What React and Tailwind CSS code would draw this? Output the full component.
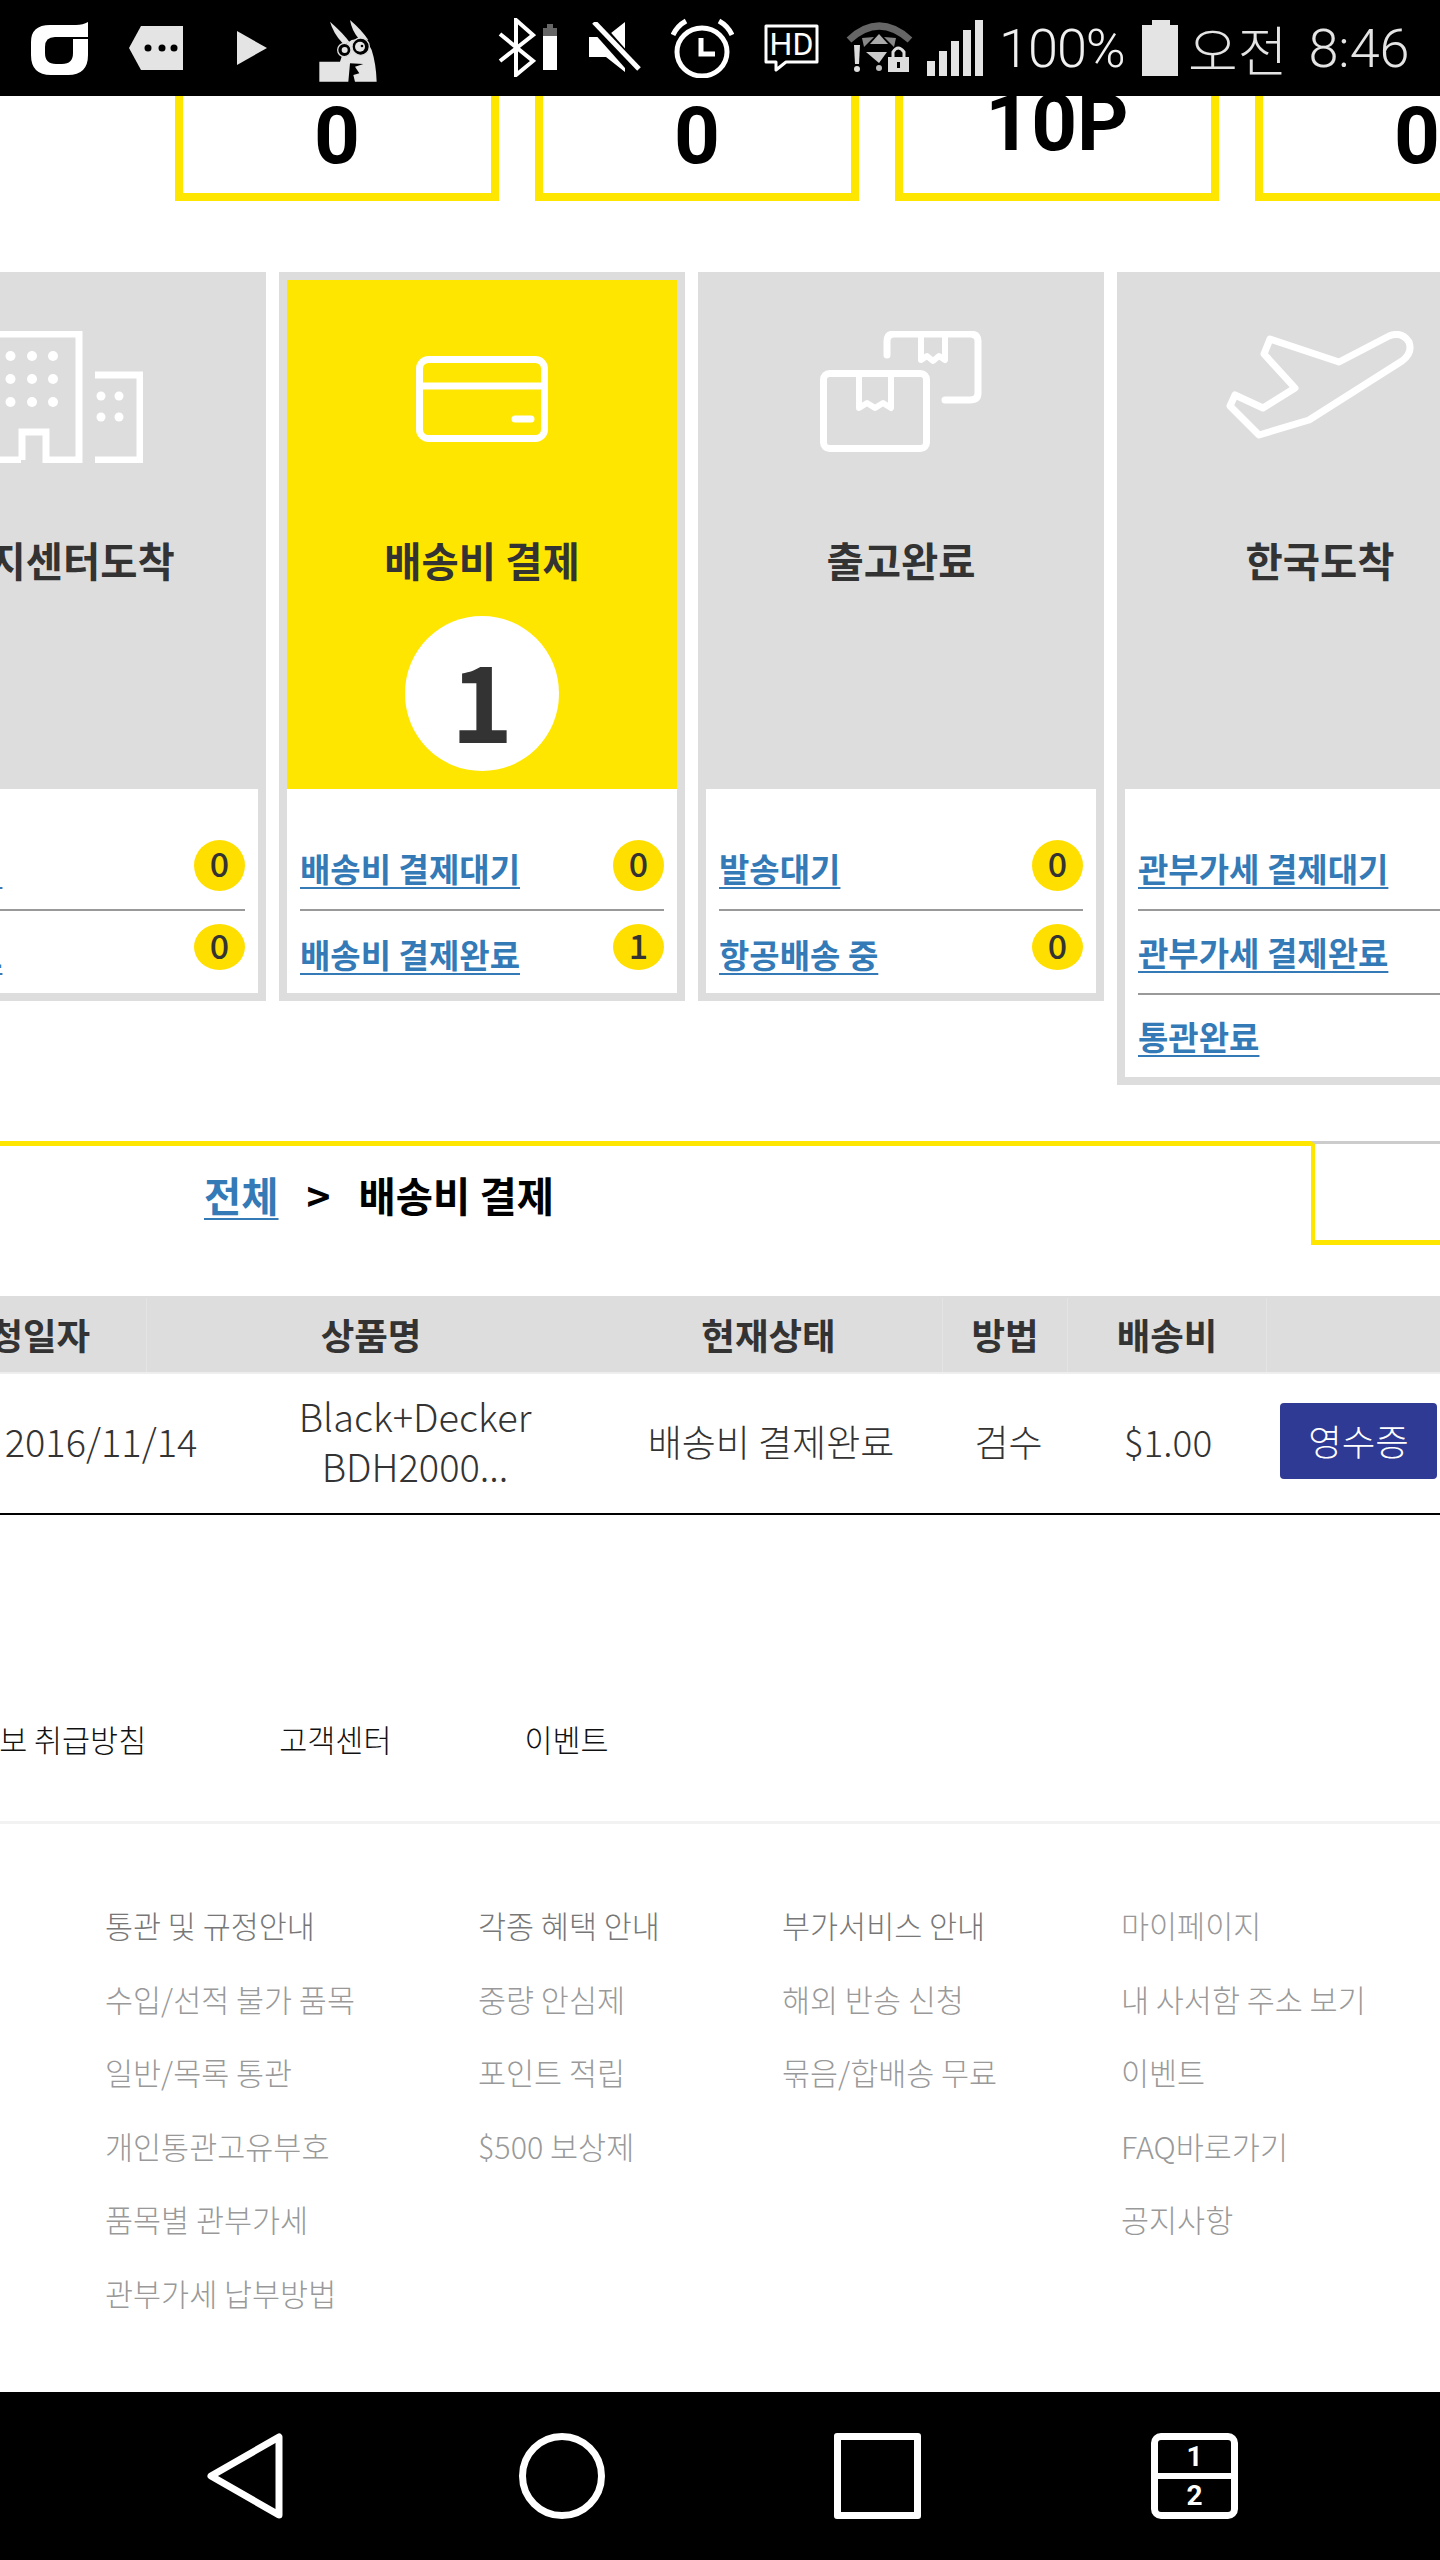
const statusGray = "#e4e4e4";

function StatusBar() {
  return (
    <div className="relative z-10 flex h-[96px] shrink-0 items-start overflow-hidden bg-black">
      {/* app logo */}
      <svg className="mt-[22px] ml-[31px]" width="58" height="53" viewBox="0 0 58 53">
        <path fillRule="evenodd" fill="#fff" d="M19 3H45Q52 3 57 0V15H42V17H57V33Q57 53 37 53H20Q0 53 0 33V20Q0 3 19 3ZM24 15H42V31Q42 42 31 42H25Q14 42 14 31V25Q14 15 24 15Z" />
      </svg>
      <svg className="mt-[26px] ml-[40px]" width="54" height="44" viewBox="0 0 54 44">
        <path fill={statusGray} d="M0 22L12 0H54V44H12Z" />
        <circle cx="19" cy="22" r="3.5" fill="#000" />
        <circle cx="33" cy="22" r="3.5" fill="#000" />
        <circle cx="45" cy="22" r="3.5" fill="#000" />
      </svg>
      <svg className="mt-[31px] ml-[54px]" width="30" height="34" viewBox="0 0 30 34">
        <path fill={statusGray} d="M0 0L30 17L0 34Z" />
      </svg>
      {/* rabbit */}
      <svg className="mt-[20px] ml-[33px]" width="120" height="70" viewBox="0 0 360 210">
        <g fill={statusGray}>
          <path d="M90 5Q130 40 150 68L128 70Q100 40 90 5Z" />
          <path d="M150 0Q185 30 205 60L175 55Q155 30 150 0Z" />
          <path d="M155 60Q200 50 215 90Q228 130 230 185H165L160 165L178 160L165 140L190 132L150 130L145 185H58V125H120L125 110Q115 85 155 60Z" />
        </g>
        <circle cx="133" cy="90" r="20" fill="#000" stroke="#ddd" strokeWidth="4" />
        <circle cx="134" cy="90" r="9" fill={statusGray} />
        <circle cx="182" cy="80" r="26" fill="#000" stroke="#ddd" strokeWidth="4" />
        <circle cx="180" cy="80" r="15" fill={statusGray} />
        <circle cx="186" cy="78" r="4" fill="#000" />
      </svg>
      <svg className="mt-[18px] ml-[78px]" width="38" height="59" viewBox="0 0 38 59">
        <path fill="none" stroke="#fff" strokeWidth="4" d="M2 16L35 43L18 57V2L35 17L2 43" />
      </svg>
      <svg className="mt-[24px] ml-[7px]" width="14" height="46" viewBox="0 0 14 46">
        <path fill="#666" d="M4 0H10V4H14V12H0V4H4Z" />
        <rect y="12" width="14" height="34" fill="#fff" />
      </svg>
      <svg className="mt-[22px] ml-[32px]" width="52" height="50" viewBox="0 0 52 50">
        <path fill="#fff" d="M0 15H17L36 0V50L17 35H0Z" />
        <path stroke="#000" strokeWidth="13" d="M2 -2L50 52" />
        <path stroke="#fff" strokeWidth="5" d="M5 0L50 47" />
      </svg>
      <svg className="mt-[18px] ml-[30px]" width="63" height="60" viewBox="0 0 63 60">
        <ellipse cx="31" cy="34" rx="25" ry="24" fill="none" stroke="#fff" strokeWidth="5" />
        <path fill="none" stroke="#fff" strokeWidth="5" d="M30 20V36H44" />
        <path fill="none" stroke="#fff" strokeWidth="5" d="M2 17Q6 8 15 3M48 3Q57 8 61 17" />
      </svg>
      <svg className="mt-[24px] ml-[30px]" width="55" height="48" viewBox="0 0 55 48">
        <path fill="none" stroke="#fff" strokeWidth="3" strokeLinejoin="round" d="M2 2H53V38H22L12 46V38H2Z" />
        <text x="27.5" y="31" textAnchor="middle" fontFamily="Roboto, sans-serif" fontSize="32" fill="#fff">HD</text>
      </svg>
      <svg className="mt-[22px] ml-[27px]" width="67" height="51" viewBox="0 0 67 51">
        <path fill="none" stroke="#666" strokeWidth="7" d="M3 18Q33 -10 64 18" />
        <path fill="#aaa" d="M33 12L24 22H42Z" />
        <path fill="#888" d="M16 16L28 15L18 25ZM50 16L38 15L48 25Z" />
        <path fill="#ccc" d="M20 30L41 30L33 41Z" />
        <circle cx="33" cy="46" r="3" fill="#bbb" />
        <path fill="#ddd" d="M8 23H14L13 42H9Z" />
        <circle cx="11" cy="47" r="3" fill="#ddd" />
        <path fill="none" stroke="#ddd" strokeWidth="3" d="M47 35V30Q52 22 58 30V35" />
        <path fill="#ddd" fillRule="evenodd" d="M42 35H63V50H42ZM51 40V46H54V40Z" />
      </svg>
      <svg className="mt-[20px] ml-[14px]" width="56" height="56" viewBox="0 0 56 56">
        <g fill={statusGray}>
          <rect x="0" y="41" width="8" height="15" />
          <rect x="12" y="31" width="8" height="25" />
          <rect x="24" y="21" width="8" height="35" />
          <rect x="36" y="10" width="8" height="46" />
          <rect x="48" y="0" width="8" height="56" />
        </g>
      </svg>
      <div className="mt-[17px] ml-[16px] w-[125px] font-['Roboto',sans-serif] text-[54px] leading-[64px] font-light tracking-[-1px] text-[#f0f0f0]">100%</div>
      <svg className="mt-[20px] ml-[18px]" width="36" height="56" viewBox="0 0 36 56">
        <path fill={statusGray} d="M10 0H28V5H36V56H0V5H10Z" />
      </svg>
      <div className="mt-[17px] ml-[10px] flex gap-[21px] text-[54px] leading-[64px] font-light text-[#e4e4e4]">
        <span className="font-['Noto_Sans_CJK_KR',sans-serif]">오전</span>
        <span className="font-['Roboto',sans-serif]">8:46</span>
      </div>
    </div>
  );
}

function PointBox({ value, lift }) {
  return (
    <div className={`flex h-[105px] w-[324px] shrink-0 items-center justify-center border-x-[8px] border-b-[8px] border-[#ffe600] font-['Roboto',sans-serif] text-[80px] leading-none font-bold text-black ${lift}`}>
      {value}
    </div>
  );
}

const iconStroke = { fill: "none", stroke: "#fff", strokeWidth: 6, strokeLinecap: "round", strokeLinejoin: "round" };

function BuildingIcon() {
  return (
    <svg width="160" height="132" viewBox="0 0 160 132">
      <path {...iconStroke} strokeLinecap="butt" strokeLinejoin="miter" strokeWidth="7" d="M38 129H3V3H96V129H63V101H39V129" />
      <path {...iconStroke} strokeLinecap="butt" strokeLinejoin="miter" strokeWidth="7" d="M112 44H157V129H112" />
      <g fill="#fff">
        {[6, 27.5, 49, 70].map((x) =>
          [25, 48, 71].map((y) => <circle key={`${x}-${y}`} cx={x} cy={y} r="5" />)
        )}
        {[118, 136].map((x) =>
          [65, 86].map((y) => <circle key={`${x}-${y}`} cx={x} cy={y} r="4.5" />)
        )}
      </g>
    </svg>
  );
}

function CardIcon() {
  return (
    <svg width="132" height="132" viewBox="0 0 132 132">
      <rect x="3.5" y="28.5" width="125" height="79" rx="9" {...iconStroke} strokeWidth="7" />
      <path {...iconStroke} strokeWidth="7" strokeLinecap="butt" d="M3 55H129" />
      <path {...iconStroke} strokeWidth="7" d="M99 88H115" />
    </svg>
  );
}

function BoxesIcon() {
  return (
    <svg width="162" height="132" viewBox="0 0 162 132">
      <rect x="3.5" y="42.5" width="103" height="75" rx="6" {...iconStroke} strokeWidth="7" />
      <path {...iconStroke} strokeWidth="6" d="M39 43V77L47 72L55 77L63 72L71 77V43" />
      <path {...iconStroke} strokeWidth="7" d="M67 24V10Q67 3 74 3H150Q158 3 158 10V62Q158 69 150 69H125" />
      <path {...iconStroke} strokeWidth="6" d="M101 3V29L107 25L113 30L119 25L125 29V3" />
    </svg>
  );
}

function PlaneIcon() {
  return (
    <svg width="188" height="132" viewBox="0 0 188 132">
      <path {...iconStroke} strokeWidth="7" d="M44 8L113 31L163 5Q176 0 183 11Q187 22 176 30L83 89L33 104L4 75L9 64L37 77L69 57L38 23Z" />
    </svg>
  );
}

function Badge({ value, short }) {
  return (
    <span className={`mt-[13px] flex w-[51px] items-center justify-center rounded-[50%] bg-[#ffdf00] pb-[6px] text-[34px] font-medium text-[#333] ${short ? "h-[46px]" : "h-[51px]"}`}>
      {value}
    </span>
  );
}

function StatusRow({ label, count, short, last }) {
  return (
    <div className={`flex items-start justify-between ${last ? "h-[82px]" : "h-[84px] border-b-2 border-[#999]"}`}>
      <a className={`text-[33px] leading-[50px] font-bold text-[#337ab7] underline decoration-2 underline-offset-[5px] ${short && count !== undefined ? "mt-[18px]" : "mt-[16px]"}`}>
        {label}
      </a>
      {count !== undefined && <Badge value={count} short={short} />}
    </div>
  );
}

const stepCards = [
  {
    title: "현지센터도착",
    icon: <BuildingIcon />,
    rows: [
      { label: "입고대기", count: 0 },
      { label: "입고완료", count: 0 },
    ],
  },
  {
    title: "배송비 결제",
    icon: <CardIcon />,
    active: true,
    rows: [
      { label: "배송비 결제대기", count: 0 },
      { label: "배송비 결제완료", count: 1 },
    ],
  },
  {
    title: "출고완료",
    icon: <BoxesIcon />,
    rows: [
      { label: "발송대기", count: 0 },
      { label: "항공배송 중", count: 0 },
    ],
  },
  {
    title: "한국도착",
    icon: <PlaneIcon />,
    rows: [{ label: "관부가세 결제대기" }, { label: "관부가세 결제완료" }, { label: "통관완료" }],
  },
];

function StepCard({ card }) {
  return (
    <div className="w-[406px] shrink-0 border-[8px] border-[#dddddd] bg-white">
      <div className={`flex h-[509px] flex-col items-center pt-[51px] ${card.active ? "bg-[#ffe600]" : "bg-[#dddddd]"}`}>
        {card.icon}
        <div className="mt-[67px] text-[40.5px] leading-[60px] font-bold text-[#333]">{card.title}</div>
        {card.active && (
          <div className="mt-[26px] flex h-[155px] w-[154px] items-center justify-center rounded-full bg-white pt-[6px] text-[106px] leading-none font-bold text-[#333]">
            1
          </div>
        )}
      </div>
      <div className="px-[13px] pt-[38px]">
        {card.rows.map((row, i) => (
          <StatusRow key={row.label} {...row} short={i === 1} last={i === card.rows.length - 1} />
        ))}
      </div>
    </div>
  );
}

function Breadcrumb() {
  return (
    <div className="mt-[56px] flex h-[104px]">
      <div className="flex w-[1311px] shrink-0 items-center border-t-[5px] border-[#ffe600] pl-[204px] text-[40.5px] font-bold text-black">
        <a className="text-[#337ab7] underline decoration-2 underline-offset-[6px]">전체</a>
        <span className="mx-[28px]">&gt;</span>
        <span>배송비 결제</span>
      </div>
      <div className="flex-1 border-t-[3px] border-r-0 border-b-[5px] border-l-[4px] border-t-[#cccccc] border-b-[#ffe600] border-l-[#ffe600]" />
    </div>
  );
}

function OrderTable() {
  return (
    <div className="mt-[51px] text-[#333]">
      <div className="-ml-[95px] flex h-[78px] w-[1535px] border-b-2 border-[#eeeeee] bg-[#dddddd] bg-clip-padding pt-[2px] text-[36.5px] font-bold">
        <div className="flex w-[242px] items-center justify-center border-r border-[#e4e4e4] pr-[5px]">신청일자</div>
        <div className="flex w-[448px] items-center justify-center">상품명</div>
        <div className="flex w-[348px] items-center justify-center border-r border-[#e4e4e4]">현재상태</div>
        <div className="flex w-[125px] items-center justify-center border-r border-[#e4e4e4]">방법</div>
        <div className="flex w-[199px] items-center justify-center border-r border-[#e4e4e4]">배송비</div>
        <div className="flex-1" />
      </div>
      <div className="-ml-[40px] flex h-[141px] w-[1480px] items-center border-b-2 border-black pb-[5px] text-[37px] leading-[50px] font-light">
        <div className="w-[282px] text-center text-[38px]">2016/11/14</div>
        <div className="w-[346px] text-center text-[38px]">
          Black+Decker
          <br />
          BDH2000...
        </div>
        <div className="w-[366px] text-center">배송비 결제완료</div>
        <div className="w-[109px] text-center">검수</div>
        <div className="w-[210px] text-center">$1.00</div>
        <button className="ml-[7px] h-[76px] w-[157px] rounded-[4px] bg-[#2e3a94] text-[36.5px] text-white">영수증</button>
      </div>
    </div>
  );
}

const footerColumns = [
  { width: "w-[373px]", items: ["통관 및 규정안내", "수입/선적 불가 품목", "일반/목록 통관", "개인통관고유부호", "품목별 관부가세", "관부가세 납부방법"] },
  { width: "w-[304px]", items: ["각종 혜택 안내", "중량 안심제", "포인트 적립", "$500 보상제"] },
  { width: "w-[339px]", items: ["부가서비스 안내", "해외 반송 신청", "묶음/합배송 무료"] },
  { width: "w-[300px]", head: "text-[#999999]", items: ["마이페이지", "내 사서함 주소 보기", "이벤트", "FAQ바로가기", "공지사항"] },
];

function Footer() {
  return (
    <div className="flex-1">
      <div className="mt-[195px] -ml-[85px] flex h-[60px] items-center gap-[133px] text-[30.5px] font-light whitespace-nowrap text-[#111]">
        <span>개인정보 취급방침</span>
        <span>고객센터</span>
        <span>이벤트</span>
      </div>
      <div className="mt-[51px] border-t-[3px] border-[#f2f2f2]" />
      <div className="flex pt-[65px] pl-[105px] text-[30.5px] font-light whitespace-nowrap">
        {footerColumns.map((col) => (
          <div key={col.items[0]} className={col.width}>
            {col.items.map((item, i) => (
              <div key={item} className={`h-[73.6px] leading-[73.6px] ${i === 0 ? col.head || "text-[#777]" : "text-[#999999]"}`}>
                {item}
              </div>
            ))}
          </div>
        ))}
      </div>
    </div>
  );
}

function NavBar() {
  return (
    <div className="flex h-[168px] shrink-0 items-start bg-black pt-[41px]">
      <svg className="ml-[207px]" width="76" height="86" viewBox="0 0 76 86">
        <path fill="none" stroke="#fff" strokeWidth="7" strokeLinejoin="round" d="M72 4V82L4 43Z" />
      </svg>
      <div className="ml-[236px] h-[86px] w-[86px] rounded-full border-[7px] border-white" />
      <div className="ml-[229px] h-[86px] w-[87px] rounded-[3px] border-[7px] border-white" />
      <div className="ml-[230px] flex h-[86px] w-[87px] flex-col rounded-[10px] border-[7px] border-white font-['Roboto',sans-serif] text-[28px] leading-none font-bold text-white">
        <div className="flex h-[33px] items-center justify-center">1</div>
        <div className="h-[6px] bg-white" />
        <div className="flex flex-1 items-center justify-center">2</div>
      </div>
    </div>
  );
}

export default function App() {
  return (
    <div className="flex h-[2560px] w-[1440px] flex-col overflow-hidden bg-white font-['Noto_Sans_CJK_KR',sans-serif]">
      <StatusBar />
      <div className="ml-[175px] flex gap-[36px]">
        <PointBox value="0" lift="pb-[18px]" />
        <PointBox value="0" lift="pb-[18px]" />
        <PointBox value="10P" lift="pb-[44px] text-[76px]" />
        <PointBox value="0" lift="pb-[18px]" />
      </div>
      <div className="mt-[71px] -ml-[140px] flex items-start gap-[13px]">
        {stepCards.map((card) => (
          <StepCard key={card.title} card={card} />
        ))}
      </div>
      <Breadcrumb />
      <OrderTable />
      <Footer />
      <NavBar />
    </div>
  );
}
